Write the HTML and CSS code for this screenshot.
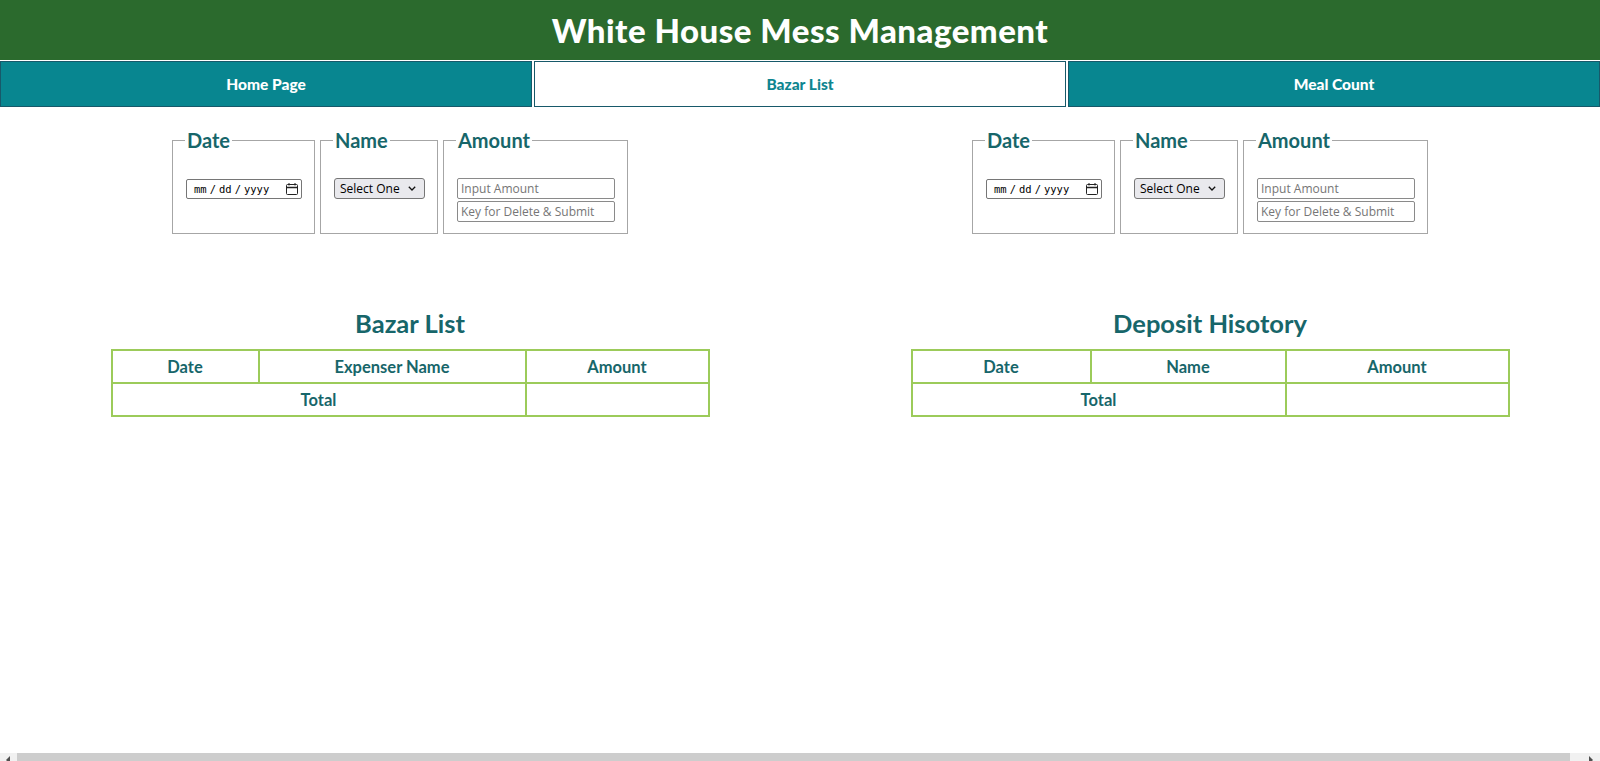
FILE: index.html
```html
<!DOCTYPE html>
<html lang="en">
<head>
<meta charset="utf-8">
<title>White House Mess Management</title>
<link rel="stylesheet" href="styles.css">
</head>
<body>
<header class="topbar">
  <h1 class="brand">White House Mess Management</h1>
</header>
<nav class="tabs">
  <a class="tab" href="#">Home Page</a>
  <a class="tab active" href="#">Bazar List</a>
  <a class="tab" href="#">Meal Count</a>
</nav>
<main class="columns">
  <section class="col">
    <form class="entry">
      <fieldset class="box box-date">
        <legend>Date</legend>
        <input class="in-date" type="date">
      </fieldset>
      <fieldset class="box box-name">
        <legend>Name</legend>
        <select class="in-select"><option>Select One</option></select>
      </fieldset>
      <fieldset class="box box-amount">
        <legend>Amount</legend>
        <input class="in-text" type="text" placeholder="Input Amount">
        <input class="in-text" type="text" placeholder="Key for Delete &amp; Submit">
      </fieldset>
    </form>
    <div class="report">
      <h2 class="report-title">Bazar List</h2>
      <table class="ledger ledger-bazar">
        <tr><th class="c1">Date</th><th class="c2">Expenser Name</th><th class="c3">Amount</th></tr>
        <tr><th colspan="2">Total</th><td></td></tr>
      </table>
    </div>
  </section>
  <section class="col">
    <form class="entry">
      <fieldset class="box box-date">
        <legend>Date</legend>
        <input class="in-date" type="date">
      </fieldset>
      <fieldset class="box box-name">
        <legend>Name</legend>
        <select class="in-select"><option>Select One</option></select>
      </fieldset>
      <fieldset class="box box-amount">
        <legend>Amount</legend>
        <input class="in-text" type="text" placeholder="Input Amount">
        <input class="in-text" type="text" placeholder="Key for Delete &amp; Submit">
      </fieldset>
    </form>
    <div class="report">
      <h2 class="report-title">Deposit Hisotory</h2>
      <table class="ledger ledger-deposit">
        <tr><th class="c1">Date</th><th class="c2">Name</th><th class="c3">Amount</th></tr>
        <tr><th colspan="2">Total</th><td></td></tr>
      </table>
    </div>
  </section>
</main>
<div class="hscroll"><span class="arrow arrow-l"></span><span class="thumb"></span><span class="arrow arrow-r"></span></div>
</body>
</html>
```
FILE: styles.css
```css
html, body {
  margin: 0;
  padding: 0;
  background: #ffffff;
}
body {
  font-family: "Lato", "Open Sans", sans-serif;
  overflow: hidden;
}
.topbar {
  background: #2b6a2d;
  height: 60px;
  display: flex;
  align-items: center;
  justify-content: center;
}
.brand {
  margin: 0;
  padding-top: 1px;
  color: #ffffff;
  font-family: "Comic Sans MS", "Lato", sans-serif;
  font-weight: 900;
  font-size: 33px;
  letter-spacing: 0.5px;
  line-height: 1;
}
.tabs {
  display: flex;
  gap: 2px;
  margin-top: 1px;
  height: 46px;
}
.tab {
  flex: 1;
  display: flex;
  align-items: center;
  justify-content: center;
  background: #088690;
  border: 1px solid #17596a;
  color: #ffffff;
  text-decoration: none;
  font-family: "Comic Sans MS", "Lato", sans-serif;
  font-weight: 900;
  font-size: 15.5px;
}
.tab.active {
  background: #ffffff;
  color: #0f8590;
}
.columns {
  display: flex;
}
.col {
  width: 800px;
  flex: none;
}
.entry {
  display: flex;
  justify-content: center;
  gap: 5px;
  margin-top: 21px;
}
.box {
  margin: 0;
  padding: 26px 12px 11px 13px;
  border: 1px solid #a6a6a6;
  display: flex;
  flex-direction: column;
  gap: 2px;
}
.box legend {
  padding: 0 2px;
  margin-left: -1px;
  color: #17666a;
  font-family: "Lato", "Open Sans", sans-serif;
  font-weight: 700;
  font-size: 20px;
  line-height: 24px;
}
.box-date {
  padding-top: 27px;
}
.in-date {
  box-sizing: border-box;
  width: 116px;
  height: 20px;
  margin: 0;
  padding: 0 3px 0 6px;
  border: 1px solid #767676;
  border-radius: 2px;
  font-family: "DejaVu Sans Mono", monospace;
  font-size: 10.5px;
  color: #000;
}
.in-date::-webkit-datetime-edit-text {
  padding: 0 2px;
  font-family: "Open Sans", sans-serif;
}
.in-date::-webkit-calendar-picker-indicator {
  width: 12px;
  height: 12px;
  padding: 0;
  margin: 0 0 0 2px;
  background: url("data:image/svg+xml,%3Csvg xmlns='http://www.w3.org/2000/svg' width='12' height='12' viewBox='0 0 12 12'%3E%3Crect x='0.5' y='1.5' width='11' height='10' rx='1' fill='none' stroke='%23222' stroke-width='1'/%3E%3Cpath d='M0.5 4.5h11' stroke='%23222' stroke-width='1.4'/%3E%3Cpath d='M3 0v2.5M9 0v2.5' stroke='%23222' stroke-width='1'/%3E%3C/svg%3E") no-repeat center;
}
.in-select {
  box-sizing: border-box;
  width: 91px;
  height: 21px;
  margin: 0;
  padding: 0 0 0 5px;
  border: 1px solid #767676;
  border-radius: 3px;
  -webkit-appearance: none;
  appearance: none;
  background: #e9e9ed url("data:image/svg+xml,%3Csvg xmlns='http://www.w3.org/2000/svg' width='8' height='5' viewBox='0 0 8 5'%3E%3Cpath d='M0.8 0.8L4 4L7.2 0.8' fill='none' stroke='%23111' stroke-width='1.3'/%3E%3C/svg%3E") no-repeat right 8px center;
  font-family: "Open Sans", "Liberation Sans", sans-serif;
  font-size: 12px;
  color: #000;
}
.in-text {
  box-sizing: border-box;
  width: 158px;
  height: 21px;
  margin: 0;
  padding: 0 3px;
  border: 1px solid #8a8a8a;
  border-radius: 2px;
  font-family: "Open Sans", "Liberation Sans", sans-serif;
  font-size: 12px;
}
.in-text::placeholder {
  color: #767676;
}
.report {
  padding-left: 20px;
  margin-top: 73px;
}
.report-title {
  margin: 0 0 10px;
  text-align: center;
  color: #17666a;
  font-family: "Lato", "Open Sans", sans-serif;
  font-weight: 700;
  font-size: 25.5px;
  line-height: 32px;
}
.ledger {
  margin: 0 auto;
  width: 599px;
  border-collapse: collapse;
  table-layout: fixed;
}
.ledger th, .ledger td {
  border: 2px solid #9ccb5a;
  height: 31px;
  padding: 0;
  text-align: center;
  color: #17666a;
  font-family: "Lato", "Open Sans", sans-serif;
  font-weight: 700;
  font-size: 16.5px;
}
.ledger-bazar .c1 { width: 145px; }
.ledger-bazar .c2 { width: 265px; }
.ledger-deposit .c1 { width: 177px; }
.ledger-deposit .c2 { width: 193px; }
.hscroll {
  position: fixed;
  left: 0;
  right: 0;
  bottom: 0;
  height: 8px;
  background: #f1f1f1;
  display: flex;
  align-items: stretch;
}
.hscroll .arrow {
  width: 17px;
  flex: none;
  position: relative;
}
.hscroll .arrow::after {
  content: "";
  position: absolute;
  top: 3px;
  left: 6px;
  border-style: solid;
  border-width: 4px 4px 4px 0;
  border-color: transparent #505050 transparent transparent;
}
.hscroll .arrow-r::after {
  border-width: 4px 0 4px 4px;
  border-color: transparent transparent transparent #505050;
}
.hscroll .thumb {
  flex: 1;
  background: #cdcdcd;
  margin-right: 13px;
}
```
